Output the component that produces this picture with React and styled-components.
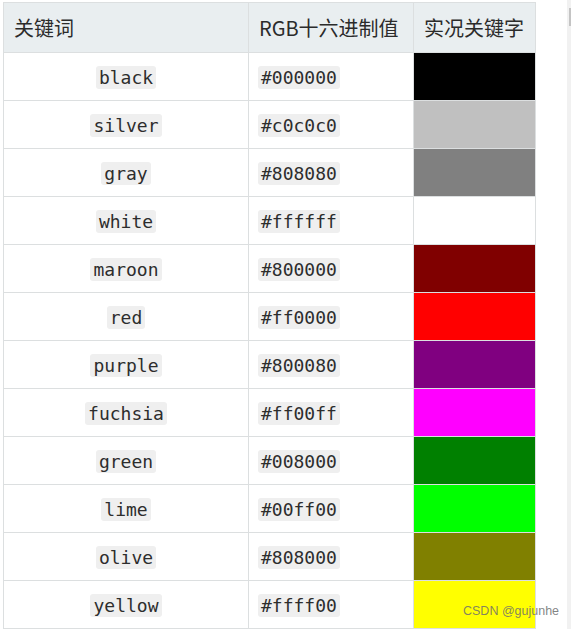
import React from "react";
import styled, { createGlobalStyle } from "styled-components";

const Global = createGlobalStyle`
  html, body { margin: 0; padding: 0; background: #fff; }
  body { font-family: "Noto Sans CJK SC", "Noto Sans", sans-serif; overflow: hidden; }
`;

const Page = styled.div`
  display: flex;
  width: 571px;
  height: 629px;
`;

const Main = styled.div`
  position: relative;
  flex: 1;
  padding: 2px 0 0 3px;
`;

const Track = styled.div`
  position: relative;
  width: 4px;
  height: 629px;
  background: #f1f1f1;
`;

const Thumb = styled.div`
  position: absolute;
  top: 8px;
  right: 0;
  width: 2px;
  height: 18px;
  background: #c4c4c4;
`;

const Table = styled.table`
  border-collapse: collapse;
  table-layout: fixed;
  width: 532px;
`;

const Th = styled.th`
  height: 50px;
  padding: 0 10px;
  background: #e9eef0;
  border: 1px solid #dcdfe0;
  text-align: left;
  font-weight: 400;
  font-size: 20px;
  color: #2b2b2b;
  white-space: nowrap;
  box-sizing: border-box;
`;

const Td = styled.td`
  height: 48px;
  padding: 0 ${(p) => (p.$center ? "10px" : "9px")};
  border: 1px solid #dcdfe0;
  text-align: ${(p) => (p.$center ? "center" : "left")};
  background: ${(p) => p.$swatch || "#fff"};
  box-sizing: border-box;
`;

const Code = styled.code`
  display: inline-block;
  font-family: "DejaVu Sans Mono", "Liberation Mono", monospace;
  font-size: 18px;
  line-height: 23px;
  padding: 0 3px;
  border-radius: 3px;
  background: #efefef;
  color: #2d2d2d;
`;

const Watermark = styled.div`
  position: absolute;
  left: 463px;
  top: 604px;
  font-family: "Liberation Sans", Arial, sans-serif;
  font-size: 12.5px;
  color: rgba(110, 110, 110, 0.85);
  white-space: nowrap;
`;

const rows = [
  ["black", "#000000"],
  ["silver", "#c0c0c0"],
  ["gray", "#808080"],
  ["white", "#ffffff"],
  ["maroon", "#800000"],
  ["red", "#ff0000"],
  ["purple", "#800080"],
  ["fuchsia", "#ff00ff"],
  ["green", "#008000"],
  ["lime", "#00ff00"],
  ["olive", "#808000"],
  ["yellow", "#ffff00"],
];

export default function App() {
  return (
    <>
      <Global />
      <Page>
        <Main>
          <Table>
            <colgroup>
              <col style={{ width: 245 }} />
              <col style={{ width: 165 }} />
              <col style={{ width: 122 }} />
            </colgroup>
            <thead>
              <tr>
                <Th>关键词</Th>
                <Th>RGB十六进制值</Th>
                <Th>实况关键字</Th>
              </tr>
            </thead>
            <tbody>
              {rows.map(([name, hex]) => (
                <tr key={name}>
                  <Td $center>
                    <Code>{name}</Code>
                  </Td>
                  <Td>
                    <Code>{hex}</Code>
                  </Td>
                  <Td $swatch={hex} />
                </tr>
              ))}
            </tbody>
          </Table>
          <Watermark>CSDN @gujunhe</Watermark>
        </Main>
        <Track>
          <Thumb />
        </Track>
      </Page>
    </>
  );
}
